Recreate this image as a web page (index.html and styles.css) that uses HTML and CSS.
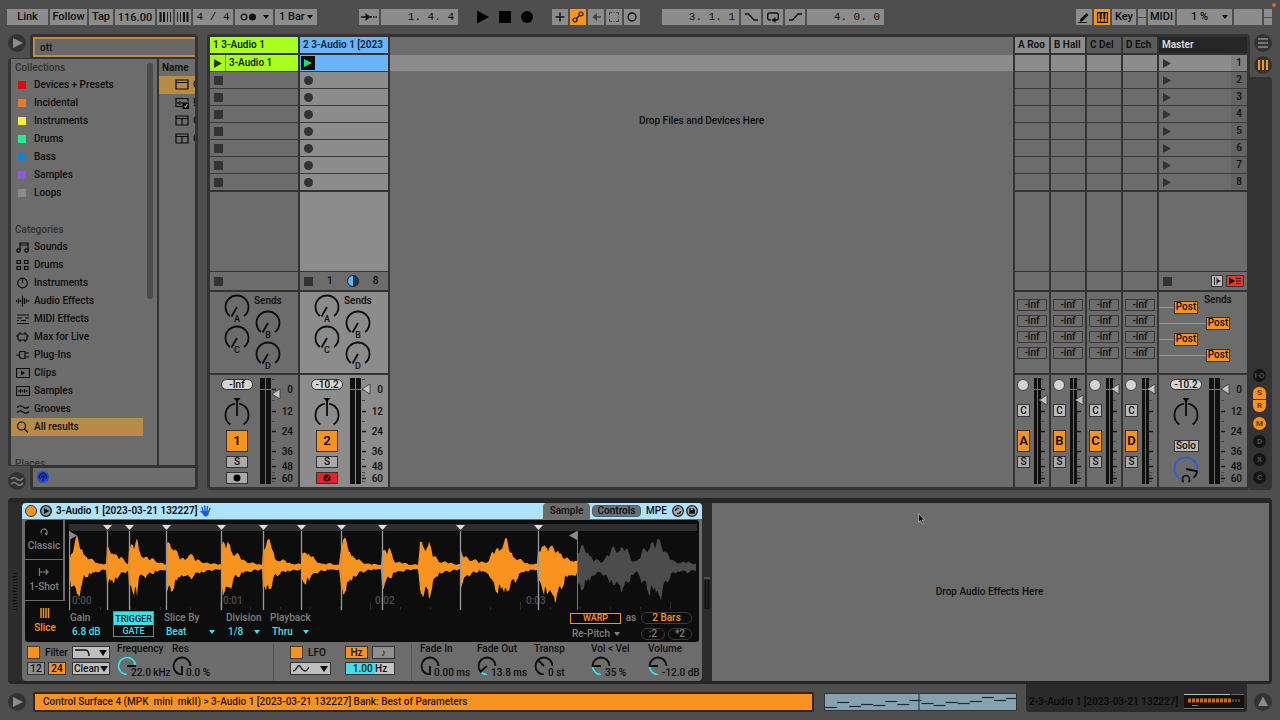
FILE: index.html
```html
<!DOCTYPE html>
<html lang="en">
<head>
<meta charset="utf-8">
<title>Session View</title>
<link rel="stylesheet" href="styles.css">
</head>
<body>
<header class="toolbar">
  <div class="group">
    <button class="tb w41">Link</button>
    <button class="tb w37">Follow</button>
    <button class="tb w24">Tap</button>
    <input class="tb w40" aria-label="Tempo" value="116.00">
    <button class="tb w16" aria-label="Nudge down"><svg width="12" height="10"><path d="M1.5 0v10M5 0v10" stroke="#111" stroke-width="2"/><path d="M8.5 0v10M11.5 0v10" stroke="#222"/></svg></button>
    <button class="tb w16" aria-label="Nudge up"><svg width="12" height="10"><path d="M.5 0v10M3.5 0v10" stroke="#222"/><path d="M7 0v10M10.500 0v10" stroke="#111" stroke-width="2"/></svg></button>
    <input class="tb w40 mono" aria-label="Time signature" value="4 / 4">
    <button class="tb w38 spread" aria-label="Metronome"><svg width="17" height="8"><circle cx="4" cy="4" r="2.800" fill="none" stroke="#111" stroke-width="1.300"/><circle cx="12.500" cy="4" r="3.600" fill="#111"/></svg><i class="caret"></i></button>
    <label class="drop w42"><select class="tb left" aria-label="Quantization"><option>1 Bar</option></select><i class="caret"></i></label>
  </div>
  <div class="group g-pos">
    <button class="tb w20" aria-label="Arrangement position"><svg width="16" height="8"><path d="M0 4h6M9 4h2M12 4h1.500M14.500 4h1.500" stroke="#111" stroke-width="1.300"/><path d="M4.500 0L9.500 4 4.500 8z" fill="#111"/></svg></button>
    <input class="tb w77 mono end" aria-label="Position" value="1. 4. 4">
  </div>
  <div class="group transport">
    <button class="bare" aria-label="Play"><svg width="12" height="14"><path d="M0 .500L12 7 0 13.500z"/></svg></button>
    <button class="bare" aria-label="Stop"><svg width="12" height="14"><path d="M0 1h12v12H0z"/></svg></button>
    <button class="bare" aria-label="Record"><svg width="12" height="14"><circle cx="6" cy="7" r="6"/></svg></button>
  </div>
  <div class="group g-auto">
    <button class="tb w16" aria-label="Overdub"><svg width="10" height="10"><path d="M5 .500v9M.500 5h9" stroke="#111" stroke-width="1.500"/></svg></button>
    <button class="tb w16 on" aria-label="Automation arm"><svg width="12" height="12"><circle cx="3" cy="9" r="2" fill="none" stroke="#111" stroke-width="1.200"/><circle cx="9" cy="3" r="2" fill="none" stroke="#111" stroke-width="1.200"/><path d="M4.500 7.500l3-3" stroke="#111" stroke-width="1.200"/></svg></button>
    <button class="tb w16" aria-label="Re-enable automation"><svg width="9" height="8"><path d="M9 4H3" stroke="#444" stroke-width="1.500"/><path d="M5 0v8L.500 4z" fill="#444"/></svg></button>
    <button class="tb w16" aria-label="Capture"><svg width="10" height="10" fill="none" stroke="#444"><path d="M.500 3V.500H3M7 .500h2.500V3M9.500 7v2.500H7M3 9.500H.500V7M.500 4.500v1M9.500 4.500v1M4.500 .500h1M4.500 9.500h1"/></svg></button>
    <button class="tb w16" aria-label="Session record"><svg width="10" height="10"><circle cx="5" cy="5" r="4" fill="none" stroke="#111" stroke-width="1.300"/></svg></button>
  </div>
  <div class="group g-loop">
    <input class="tb w77 mono end" aria-label="Loop start" value="3. 1. 1">
    <button class="tb w20" aria-label="Punch in"><svg width="13" height="8"><path d="M0 1h3.500l5.500 6h4" fill="none" stroke="#111" stroke-width="1.400"/></svg></button>
    <button class="tb w20" aria-label="Loop"><svg width="12" height="11"><path d="M4 8H2.500Q.700 8 .700 6V3Q.700 1 2.500 1h7Q11.300 1 11.300 3v3q0 2-1.800 2H8" fill="none" stroke="#111" stroke-width="1.400"/><path d="M8.500 5v6L4.500 8z" fill="#111"/></svg></button>
    <button class="tb w20" aria-label="Punch out"><svg width="13" height="8"><path d="M0 7h3.500L9 1h4" fill="none" stroke="#111" stroke-width="1.400"/></svg></button>
    <input class="tb w77 mono end" aria-label="Loop length" value="4. 0. 0">
  </div>
  <div class="group g-right">
    <button class="tb w16" aria-label="Draw mode"><svg width="12" height="12"><path d="M2 8.500L8.500 2l2 2L4 10.500H2z" fill="#111"/><path d="M0 11.500h9" stroke="#111"/></svg></button>
    <button class="tb w16 on" aria-label="Computer keyboard"><svg width="11" height="11"><path d="M.6 .6h9.800v9.800H.6z" fill="none" stroke="#111" stroke-width="1.200"/><path d="M3.700 1v6M7.300 1v6" stroke="#111" stroke-width="2"/><path d="M3.700 6v4M7.300 6v4" stroke="#111" stroke-width=".8"/></svg></button>
    <button class="tb w24">Key</button>
    <div class="pair"><i></i><i></i></div>
    <button class="tb w27">MIDI</button>
    <label class="drop w55"><select class="tb center" aria-label="CPU load"><option>1 %</option></select><i class="caret"></i></label>
    <div class="tb w28"></div>
    <div class="pair"><i></i><i></i></div>
  </div>
  <i class="rec-dot"></i>
</header>

<main class="workspace">
  <aside class="browser">
    <div class="browser-top">
      <button class="round" aria-label="Hide browser"><svg width="18" height="18"><path d="M5 4l10 5-10 5z" fill="#8c8c8c"/></svg></button>
      <div class="search-tab"><input class="search" aria-label="Search" value="ott"></div>
    </div>
    <div class="browser-main">
      <nav class="side" id="side"></nav>
      <div class="scroll"><i></i></div>
      <div class="results" id="results"></div>
    </div>
    <div class="browser-foot">
      <button class="round" aria-label="Groove pool"><svg width="18" height="18"><path d="M3 7q3-3 6 0t6-1M3 12q3-3 6 0t6-1" fill="none" stroke="#808080" stroke-width="1.500"/></svg></button>
      <div class="foot-tab"><div class="foot-in"><svg width="14" height="14"><circle cx="7" cy="7" r="6" fill="#2447d8"/><path d="M4.500 9A3.400 3.400 0 1 1 9.500 9M7 11V5.500M5.200 7.200L7 5.400l1.800 1.800" fill="none" stroke="#101a50" stroke-width="1.300"/></svg></div></div>
    </div>
  </aside>
  <section class="session" id="session"></section>
  <aside class="rail">
    <div class="rail-top">
      <button class="round" aria-label="Arrangement view"><svg width="18" height="18"><path d="M4 5h10M4 9h10M4 13h10" stroke="#8c8c8c" stroke-width="1.500"/></svg></button>
      <button class="round" aria-label="Session view"><svg width="18" height="18"><path d="M5 4v10M9 4v10M13 4v10" stroke="#f7931e" stroke-width="2"/></svg></button>
    </div>
    <div class="rail-body">
      <button class="chip">I·O</button>
      <div class="chip-pair"><button class="chip lit up">S</button><button class="chip lit down">R</button></div>
      <button class="chip lit">M</button>
      <button class="chip">D</button>
      <button class="chip">X</button>
      <button class="chip">C</button>
    </div>
  </aside>
</main>

<section class="detail">
  <div class="grip"></div>
  <article class="device">
    <header class="dev-head">
      <button class="dot-on" aria-label="Device on"></button>
      <button class="dot-play" aria-label="Preview"><svg width="12" height="12"><circle cx="6" cy="6" r="5.300" fill="#8899a5" stroke="#111" stroke-width="1.300"/><path d="M4 3l5.500 3L4 9z" fill="#111"/></svg></button>
      <h2>3-Audio 1 [2023-03-21 132227]</h2>
      <svg width="11" height="12" viewBox="0 0 11 12"><path d="M3 7L2 2.500M5 6L4.600 1M7 6l.500-4.500M8.500 7l1.500-3.500M3.500 8.500L1 6.500" stroke="#1d5fd0" stroke-width="1.500" stroke-linecap="round"/><path d="M2.500 6h6.500l-.500 4-2 1.500h-2L3 9.500z" fill="#1d5fd0"/></svg>
      <div class="tabs">
        <button class="tab cur">Sample</button>
        <button class="tab pill">Controls</button>
        <button class="tab plain">MPE</button>
        <svg width="12" height="12"><circle cx="6" cy="6" r="5.300" fill="#aaa" stroke="#222" stroke-width="1.300"/><path d="M3.500 6A2.500 2.500 0 0 1 7 3.600M8.500 6A2.500 2.500 0 0 1 5 8.400" fill="none" stroke="#222" stroke-width="1.400"/></svg>
        <svg width="12" height="12"><circle cx="6" cy="6" r="5.300" fill="#aaa" stroke="#222" stroke-width="1.300"/><path d="M3.300 3.300h4.400l1.200 1.200v4.200H3.300z" fill="#111"/><path d="M4.800 3.500h2v1.500h-2z" fill="#aaa"/></svg>
      </div>
    </header>
    <div class="screen">
      <div class="modes">
        <button class="mode"><svg width="12" height="10"><path d="M3.500 7.500A3 3 0 1 1 9 6.500V8M7 7l2 2" fill="none" stroke="#808080" stroke-width="1.200"/></svg>Classic</button>
        <button class="mode"><svg width="12" height="10"><path d="M1.500 1v8M2 5h8M7.500 2.500L10 5 7.500 7.500" fill="none" stroke="#808080" stroke-width="1.200"/></svg>1-Shot</button>
        <button class="mode lit"><svg width="12" height="10"><path d="M2 0v10M4.500 0v10M7 0v10M9.500 0v10" stroke="#f7931e" stroke-width="1.500"/></svg>Slice</button>
      </div>
      <div class="wave-side">
        <svg class="wave" id="wave" viewBox="0 0 628 88" preserveAspectRatio="none"></svg>
        <div class="params">
          <div class="p p-gain"><span>Gain</span><b>6.8 dB</b></div>
          <div class="trig"><button class="t-on">TRIGGER</button><button class="t-off">GATE</button></div>
          <div class="p p-slice"><label for="s1">Slice By</label><div class="drop"><select id="s1"><option>Beat</option></select><i class="caret"></i></div></div>
          <div class="p p-div"><label for="s2">Division</label><div class="drop"><select id="s2"><option>1/8</option></select><i class="caret"></i></div></div>
          <div class="p p-play"><label for="s3">Playback</label><div class="drop"><select id="s3"><option>Thru</option></select><i class="caret"></i></div></div>
          <div class="warp">
            <button class="warp-b">WARP</button><span class="as">as</span><button class="bars">2 Bars</button>
            <div class="drop re"><select aria-label="Warp mode"><option>Re-Pitch</option></select><i class="caret"></i></div>
            <div class="halves"><button>:2</button><button>*2</button></div>
          </div>
        </div>
      </div>
    </div>
    <div class="dev-foot">
      <div class="filter">
        <div class="row"><button class="sq" aria-label="Filter on"></button><span class="name">Filter</span><button class="lite w38" aria-label="Filter type"><svg width="17" height="8"><path d="M0 1h10q4 0 4 6" fill="none" stroke="#111" stroke-width="1.500"/></svg><i class="caret big"></i></button></div>
        <div class="row"><button class="num">12</button><button class="num on">24</button><label class="drop lite w38 push"><select aria-label="Filter circuit"><option>Clean</option></select><i class="caret big"></i></label></div>
      </div>
      <div class="knobs" id="knobsA"></div>
      <div class="lfo">
        <div class="row"><button class="sq" aria-label="LFO on"></button><span class="name">LFO</span></div>
        <button class="lite w41" aria-label="LFO shape"><svg width="16" height="9"><path d="M0 7Q2 7 4 3.500T8 3.500 12 7t4-4" fill="none" stroke="#111" stroke-width="1.300"/></svg><i class="caret big"></i></button>
      </div>
      <div class="rate">
        <div class="row"><button class="num hz on">Hz</button><button class="num hz">♪</button></div>
        <input class="rate-v" aria-label="LFO rate" value="1.00 Hz">
      </div>
      <div class="knobs far" id="knobsB"></div>
    </div>
  </article>
  <div class="meter-gap"><svg width="6" height="34"><path d="M1.500 5v29M4.500 5v29" stroke="#111" stroke-width="2"/><path d="M0 3h6" stroke="#777"/></svg></div>
  <div class="fx-drop">
    <span>Drop Audio Effects Here</span>
    <svg class="pointer" width="8" height="12"><path d="M.500 .500v9l2-2 1.500 3.500 1.500-.700L4 7h3z" fill="#111" stroke="#bbb" stroke-width=".700"/></svg>
  </div>
</section>

<footer class="status">
  <button class="round" aria-label="Show help"><svg width="18" height="18"><path d="M5 4l10 5-10 5z" fill="#8c8c8c"/></svg></button>
  <div class="msg">Control Surface 4 (MPK&nbsp; mini&nbsp; mkII) &gt; 3-Audio 1 [2023-03-21 132227] Bank: Best of Parameters</div>
  <div class="overview"><svg viewBox="0 0 190 16" preserveAspectRatio="none" id="overview"></svg></div>
  <div class="chain"><span>2-3-Audio 1 [2023-03-21 132227]</span><svg width="60" height="16"><path d="M0 0h60v16H0z" fill="#15110e"/><path d="M0 .500h46" stroke="#9fc4d8"/><path d="M47 .500h13" stroke="#667"/><path d="M0 14.500h60" stroke="#777"/><path d="M8 11.500h6" stroke="#2aa"/><path d="M4 6.500h44" stroke="#c86a1c" stroke-width="4" stroke-dasharray="3 1"/><path d="M48 6.500h8" stroke="#444" stroke-width="3" stroke-dasharray="2 1"/></svg></div>
  <button class="round" aria-label="Show detail view"><svg width="18" height="18"><path d="M9 3.500l5 9.500H4z" fill="#8c8c8c"/></svg></button>
</footer>
<script src="app.js"></script>
</body>
</html>
```
FILE: styles.css
```css
*{box-sizing:border-box}
body{margin:0;min-height:100vh;display:flex;flex-direction:column;background:#4e4e4e;color:#0c0c0c;font:500 10px/14px Roboto,"Liberation Sans",sans-serif;overflow-x:hidden}
button,input,select{font:inherit;color:inherit;border:0;padding:0;margin:0;border-radius:0;background:none;appearance:none;outline:0;min-width:0}
button{display:flex;align-items:center;justify-content:center;white-space:nowrap}
svg{display:block;flex:none}
i{display:block}
h2{margin:0;font:inherit;font-weight:600}

/* Toolbar */
.toolbar{display:flex;align-items:flex-start;padding:9px 8px 0 7px;height:34px;position:relative}
.group{display:flex;gap:2px}
.g-pos{margin-left:42px}
.transport{margin-left:19px;gap:10px}
.g-auto{margin-left:19px}
.g-loop{margin-left:22px}
.g-right{margin-left:auto}
.tb{height:16px;background:#8c8c8c;font-size:11px;text-align:center}
.mono{font-family:"Liberation Mono",monospace;font-weight:400;font-size:11px}
.end{text-align:right;padding-right:4px}
.left{text-align:left;padding-left:4px}
.center{padding-left:14px;text-align:left}
.bare{height:16px}
.on{background:#f7931e}
.spread{justify-content:space-between;padding:0 4px 0 5px}
.w16{width:16px}.w20{width:20px}.w24{width:24px}.w27{width:27px}.w28{width:28px}
.w37{width:37px}.w38{width:38px}.w40{width:40px}.w41{width:41px}.w42{width:42px}.w55{width:55px}.w77{width:77px}
.pair{width:8px;display:flex;flex-direction:column;gap:1px}
.pair i{flex:1;background:#8c8c8c}
.drop{display:flex;align-items:center;position:relative}
.drop select{flex:1}
.drop .caret{position:absolute;right:4px;pointer-events:none}
.caret{border:solid transparent;border-width:4px 3px 0;border-top-color:currentColor}
.caret.big{border-width:6px 4px 0}
.rec-dot{position:absolute;right:4px;top:3px;width:4px;height:4px;border-radius:50%;background:#d2691e}

/* Work area */
.workspace{flex:1;display:grid;grid-template-columns:190px 1fr 22px;padding:0 8px}
.session{margin-left:9px}
.round{width:18px;height:18px;border-radius:50%;background:#333;flex:none}
.browser{display:flex;flex-direction:column;min-width:0}
.browser-top,.browser-foot{display:flex;gap:4px}
.search-tab{flex:1;background:#333;border-radius:4px 4px 0 0;padding:3px 3px 1px;min-width:0}
.search{display:block;width:100%;height:20px;border:solid #b98d45;border-width:2px 0 2px 2px;background:#686868;padding-left:5px;color:#111}
.browser-main{flex:1;display:flex;background:#333;border-radius:4px 0 0 0;padding:1px 3px 1px;min-height:0}
.side{width:132px;background:#6c6c6c;height:406px;overflow:hidden}
.side h3{margin:0;font:inherit;line-height:17px;color:#333;padding-left:4px}
.side h3.gap{margin-top:19px}
.side a{display:flex;align-items:center;height:18px;padding-left:5px;color:inherit;text-decoration:none}
.side a.sel{background:#b68c46}
.side .ic{width:18px;flex:none}
.side .sw{width:8px;height:8px;margin:0 8px 0 2px}
.scroll{width:14px;background:#6c6c6c;padding:4px 4px 0}
.scroll i{width:6px;height:236px;border-radius:3px;background:#4b4b4b}
.results{flex:1;margin-left:2px;background:#6c6c6c;overflow:hidden;min-width:0}
.results h3{margin:0;font:inherit;font-weight:600;line-height:17px;padding-left:3px}
.res{display:flex;align-items:center;gap:4px;height:18px;padding-left:16px}
.res.sel{background:#b68c46}
.browser-foot{align-items:flex-end}
.foot-tab{flex:1;background:#333;border-radius:0 0 4px 4px;padding:2px 3px 3px}
.foot-in{background:#6c6c6c;height:19px;padding:2px 3px}

/* Session grid */
.session{background:#333;border-radius:4px;padding:3px;display:grid;grid-template-columns:88px 88px 1fr repeat(4,34px) 88px;gap:2px}
.track{display:grid;grid-template-rows:16px auto 1fr 17px 81px 112px;row-gap:2px;min-width:0;background:#333}
.track>*{background:#6c6c6c}
.track.hot>*,.track.hot .slot{background:#8c8c8c}
.title{padding-left:3px;line-height:16px;font-weight:600;overflow:hidden;white-space:nowrap}
.track .t-green{background:#a8ff1f;color:#122}
.track.hot .t-blue{background:#6bb4fb;color:#0c2438}
.track .t-lite{background:#8c8c8c}
.track .t-dim{background:#5c5c5c}
.track .t-dark{background:#262626;color:#ddd}
.track .slots{display:grid;grid-template-rows:repeat(8,16px);gap:1px;background:#3a3a3a}
.slot{display:flex;align-items:center;justify-content:flex-start;background:#6c6c6c;padding-left:4px}
.slot.scene-sel{background:#8c8c8c}
.slot.clip{background:#a8ff1f;padding-left:0}
.slot.clip svg{width:16px;border-right:1px solid #6a9d20;height:16px;margin-right:3px}
.hot .slot.play{background:#6bb4fb;padding-left:1px}
.slot b{margin-left:auto;width:16px;line-height:16px;background:#636363;font-weight:500;text-align:center}
.slot.scene-sel b{background:#808080}
.stops{display:flex;align-items:center;padding-left:4px;margin-top:-1px;gap:14px}
.track.hot .stops{background:#6c6c6c}
.stops .tail{display:flex;gap:3px;margin-left:auto;padding-right:3px}
.mid{background:#6c6c6c;display:flex;flex-direction:column;min-width:0}
.mid .bar{margin-top:18px;height:16px;background:#8c8c8c}
.mid p{margin:43px 0 0;text-align:center}
.mix{display:grid;grid-template-columns:50px 38px}
.strip{display:flex;flex-direction:column;align-items:center;padding:4px 0 0 4px}
.vol{width:32px;height:11px;line-height:9px;border:1px solid #333;border-radius:6px;background:#d4d4d4;text-align:center}
.strip svg{margin-top:6px}
.num-b{width:22px;height:22px;border:1px solid #333;background:#f7931e;font-size:13px;font-weight:600;margin-top:4px}
.small{width:22px;height:12px;border:1px solid #333;background:#aaa;margin-top:4px}
.small.red{background:#e5222c}
.solo{width:25px;height:12px;border:1px solid #333;background:#bbb;margin-top:14px}
.strip svg.recdot{margin:0}
.strip svg.cue{margin-top:3px}
.ret .mix{grid-template-columns:16px 18px}
.ret .strip{padding:4px 0 0 2px;align-items:flex-start}
.ball{width:12px;height:12px;border-radius:50%;border:1px solid #444;background:#d4d4d4}
.cross{width:13px;height:13px;border:1px solid #333;background:#bbb;margin-top:13px}
.ret .num-b{width:13px;margin-top:13px}
.ret .small{width:13px}
.infs{display:grid;grid-template-rows:repeat(4,12px);gap:4px;padding:7px 2px 0}
.infs button{border:1px solid #3a3a3a}
.posts{display:flex;flex-direction:column;gap:4px;padding-top:9px}
.posts div{display:flex;align-items:center;height:12px}
.posts div::before{content:"";height:1px;width:15px;background:#999}
.posts .wide::before{width:47px}
.posts button{height:13px;width:24px;border:1px solid #333;background:#f7931e}
.posts span{margin:-14px 0 0 6px}
text{font:500 9px Roboto,"Liberation Sans",sans-serif;fill:#0c0c0c}
text.lb{font-size:10px}
text.tm{font-size:10px;fill:#505050}

/* View rail */
.rail{display:flex;flex-direction:column}
.rail-top{height:43px;padding:0 0 0 4px;display:flex;flex-direction:column;gap:4px}
.rail-body{flex:1;background:#333;border-radius:0 4px 4px 0;display:flex;flex-direction:column;justify-content:flex-end;align-items:center;gap:5px;padding:0 3px 6px 0}
.chip{width:13px;height:13px;border-radius:50%;background:#141414;color:#555;font-size:8px;line-height:10px;font-weight:600}
.chip.lit{background:#f7931e;color:#553008}
.chip-pair{display:flex;flex-direction:column;gap:1px}
.chip.up{border-radius:6px 6px 0 0;height:12px}
.chip.down{border-radius:0 0 6px 6px;height:12px}

/* Device view */
.detail{margin:8px 8px 0;background:#2c2c2c;border:1px solid #262626;border-width:5px 3px 3px 0;border-radius:4px;display:flex}
.grip{width:14px;display:flex;align-items:center;justify-content:center}
.grip::before{content:"";width:4px;height:38px;background:repeating-linear-gradient(#111 0 1px,#2c2c2c 1px 3px)}
.device{width:680px;border-radius:4px;overflow:hidden;background:#6c6c6c;flex:none}
.dev-head{display:flex;align-items:center;height:16px;background:#aee2fd;padding:0 4px 0 3px}
.dot-on{width:12px;height:12px;border-radius:50%;background:#f7931e;border:1px solid #333}
.dot-play{margin:0 4px 0 3px}
.dev-head h2{margin-right:3px}
.tabs{margin-left:auto;display:flex;align-items:center;gap:2px}
.tab{height:12px}
.tab.cur{height:16px;width:47px;border-radius:4px 4px 0 0;background:#6c6c6c}
.tab.pill{width:49px;border-radius:4px;background:#66727a;border:1px solid #50606a}
.tab.plain{width:27px}
.screen{display:flex;margin:1px 3px 0;background:#0d0d0d;border-radius:3px;height:122px;overflow:hidden}
.modes{width:40px;display:grid;grid-template-rows:40px 41px 41px}
.mode{flex-direction:column;gap:3px;color:#808080;border-right:2px solid #6c6c6c;border-bottom:1px solid #6c6c6c}
.mode.lit{color:#f7931e;border:0}
.wave-side{flex:1;padding:3px 2px 0 4px;min-width:0}
.wave{width:100%;height:88px}
.params{display:flex;align-items:flex-start;color:#808080;padding-left:1px}
.p b,.p select{color:#43dfe8;font-weight:500}
.p b{padding-left:2px}
.p span,.p label,.p b{display:block;white-space:nowrap}
.p .caret{color:#43dfe8;right:0}
.p select{height:14px;padding-left:2px}
.p-gain{width:43px}
.trig{width:41px;height:26px;border:1px solid #6a8a8a;margin-right:10px;display:grid;grid-template-rows:13px 11px}
.trig button{font-size:9px;font-weight:500;overflow:hidden}
.t-on{background:#43dfe8;color:#0d2a2c}
.t-off{color:#43dfe8}
.p-slice{width:51px;margin-right:11px}
.p-div{width:34px;margin-right:10px}
.p-play{width:39px}
.warp{margin-left:auto;width:125px;margin-right:2px;display:grid;grid-template-columns:51px 20px 51px;row-gap:2px;align-items:center}
.warp-b{height:11px;border:1px solid #f7931e;color:#f7931e;font-size:9px}
.as{text-align:center}
.bars{height:12px;border:1px solid #3a3a3a;border-radius:6px;color:#f7931e}
.re{grid-column:span 2;width:50px;padding-left:2px}
.re .caret{right:0}
.halves{display:flex;gap:3px}
.halves button{width:24px;height:12px;border:1px solid #3a3a3a;border-radius:6px}
.dev-foot{display:flex;height:39px;padding-top:2px;overflow:hidden}
.row{display:flex;align-items:center;height:13px}
.filter{width:95px;padding:2px 0 0 5px;display:flex;flex-direction:column;gap:3px}
.sq{width:13px;height:13px;background:#f7931e;border:1px solid #4a3a20}
.name{margin:0 auto 0 5px}
.lite{height:13px;border:1px solid #333;background:#bfbfbf}
button.lite{justify-content:space-between;padding:0 2px}
.filter .lite{margin-right:7px}
.lite select{padding-left:1px;height:11px;line-height:11px;width:30px}
.drop.lite .caret{right:1px}
.num{width:18px;height:13px;border:1px solid #333;background:#909090;margin-right:3px}
.num.on{background:#f7931e}
.push{margin-left:auto}
.knobs{display:flex;width:157px;border-right:1px solid #555}
.kn{width:55px}
.kn:nth-child(2){flex:1}
.kn label{display:block;line-height:10px;white-space:nowrap}
.kn div{display:flex;align-items:flex-end}
.kn span{line-height:12px;margin:0 0 -4px -6px;white-space:nowrap}
.lfo{width:55px;padding:2px 0 0 16px;display:flex;flex-direction:column;gap:3px}
.rate{width:82px;padding:2px 0 0 16px;display:flex;flex-direction:column;gap:3px}
.rate .row{justify-content:space-between;width:50px}
.num.hz{width:23px;margin:0}
.rate-v{width:50px;height:13px;border:1px solid #333;background:linear-gradient(90deg,#43dfe8 60%,#c4c4c4 60%);text-align:center}
.knobs.far{flex:1;border-right:0;border-left:1px solid #555;padding-left:8px}
.far .kn,.far .kn:nth-child(2){flex:none;width:57px}
.meter-gap{width:10px;display:flex;align-items:center;justify-content:center}
.fx-drop{flex:1;background:#6c6c6c;display:flex;align-items:center;justify-content:center;position:relative;padding-right:2px}
.pointer{position:absolute;left:206px;top:10px}

/* Status bar */
.status{display:flex;height:36px;padding:0 8px;align-items:center}
.msg{flex:1;margin:0 10px 0 7px;height:20px;border:2px solid #35271a;background:#f7931e;line-height:16px;padding-left:8px;white-space:nowrap;overflow:hidden;border-radius:2px;color:#2a1804}
.overview{width:193px;height:18px;border:1px solid #333;background:#87a2af;margin-right:9px}
.overview svg{width:100%;height:16px}
.chain{display:flex;align-items:center;align-self:flex-start;height:28px;background:#2a2a2a;border-radius:0 0 3px 3px;padding:8px 3px 0;margin-right:7px;color:#080808;width:221px;justify-content:space-between;white-space:nowrap}
```
FILE: app.js
```js
const el = id => document.getElementById(id);
const S = 'stroke="#0c0c0c" fill="none"';

function pt(cx, cy, r, deg) {
  const a = deg * Math.PI / 180;
  return (cx + r * Math.sin(a)).toFixed(2) + ' ' + (cy - r * Math.cos(a)).toFixed(2);
}
function arc(cx, cy, r, from, to, color, w) {
  return `<path d="M${pt(cx, cy, r, from)}A${r} ${r} 0 ${to - from > 180 ? 1 : 0} 1 ${pt(cx, cy, r, to)}" fill="none" stroke="${color}" stroke-width="${w}"/>`;
}
function hand(cx, cy, r0, r1, deg, w) {
  return `<path d="M${pt(cx, cy, r0, deg)}L${pt(cx, cy, r1, deg)}" stroke="#0c0c0c" stroke-width="${w}"/>`;
}

/* Browser */
const swatches = [['Devices + Presets', '#e30613'], ['Incidental', '#e8792b'], ['Instruments', '#f7ef3a'], ['Drums', '#1fef8c'], ['Bass', '#1782c9'], ['Samples', '#8e5bd8'], ['Loops', '#8c8c8c']];
const cats = [
  ['Sounds', '<path d="M4 9V2h8v7M4 4h8"/><circle cx="2.500" cy="9.500" r="1.700"/><circle cx="10.500" cy="9.500" r="1.700"/>'],
  ['Drums', '<path d="M1 1.500h3.500v3H1zM8.500 1.500H12v3H8.500zM1 7.500h3.500v3H1zM8.500 7.500H12v3H8.500z"/>'],
  ['Instruments', '<circle cx="6.500" cy="6" r="4.800"/><path d="M6.500 1v5"/>'],
  ['Audio Effects', '<path d="M.500 5v2M2.500 3.500v5M4.500 5v2M6.500 .500v11M8.500 3v6M10.500 4v4M12.500 5v2"/>'],
  ['MIDI Effects', '<path d="M1 2h12M1 5h5M9 5h4M1 7.500h2M5 7.500h5M1 10.500h12"/>'],
  ['Max for Live', '<rect x="2" y="3" width="9" height="6" rx="1"/><path d="M4 1v2M9 1v2M4 9v2M9 9v2M0 5h2M11 5h2"/>'],
  ['Plug-Ins', '<path d="M4 2.500h5v7H5L3.500 8V4zM0 6h3.500M9 4h4M9 8h4"/>'],
  ['Clips', '<path d="M.500 1.500h13v9H.500z"/><path d="M5 3.500v5L9 6z" fill="#0c0c0c" stroke="none"/>'],
  ['Samples', '<path d="M.500 1.500h13v9H.500zM2 6h2M4.500 4v4M6.500 5v2M8.500 4v4M10.500 5v2"/>'],
  ['Grooves', '<path d="M1 4.500Q4 1.500 7 4t6-.500M1 9.500Q4 6.500 7 9t6-.500"/>'],
  ['All results', '<circle cx="5.500" cy="5" r="4"/><path d="M8.500 8l3.500 3.500"/>']
];
el('side').innerHTML = '<h3>Collections</h3>' +
  swatches.map(s => `<a href="#"><i class="sw" style="background:${s[1]}"></i>${s[0]}</a>`).join('') +
  '<h3 class="gap">Categories</h3>' +
  cats.map((c, i) => `<a href="#"${i === 10 ? ' class="sel"' : ''}><span class="ic"><svg width="14" height="12" ${S} stroke-width="1.200">${c[1]}</svg></span>${c[0]}</a>`).join('') +
  '<h3 class="gap">Places</h3>';

const frame = '<path d="M1 1h12v9H1zM1 3.500h12"/>';
const split = frame + '<path d="M7 3.500V10"/>';
const sampleIc = '<path d="M7 9.500H1v-8h12v3M3 5v2M5 4v4M7 5v1.500"/><path d="M8 6h6v6H8z" fill="#0c0c0c"/><path d="M9.500 9l1 1 2-3" stroke="#aaa"/>';
el('results').innerHTML = '<h3>Name</h3>' + [frame, sampleIc, split, split].map((p, i) =>
  `<div class="res${i ? '' : ' sel'}"><svg width="14" height="12" ${S} stroke-width="1.200">${p}</svg>${i === 1 ? '!' : 'O'}</div>`).join('');

/* Session */
const stopSq = '<svg width="9" height="9"><path d="M0 0h9v9H0z" fill="#333"/></svg>';
const dot = '<svg width="9" height="9"><circle cx="4.500" cy="4.500" r="4.500" fill="#333"/></svg>';
const tri = '<svg width="8" height="9"><path d="M0 0l8 4.500L0 9z" fill="#333"/></svg>';

function sends() {
  const k = [[27, 15, 'A'], [58, 31, 'B'], [27, 46, 'C'], [58, 62, 'D']];
  return '<svg width="88" height="81">' + k.map(([x, y, n]) =>
    arc(x, y, 11.5, -142, 142, '#0c0c0c', 1.8) + hand(x, y, 0, 11, -150, 1.8) +
    `<text x="${x}" y="${y + 15}" text-anchor="middle">${n}</text>`).join('') +
    '<text class="lb" x="44" y="12">Sends</text></svg>';
}
const ys = [14, 36, 56, 76, 91, 103];
function meter(fader, thin) {
  const w = thin ? 3 : 5, t = thin ? 10 : 12, x0 = thin ? 3 : 0;
  let s = `<svg width="${thin ? 18 : 38}" height="112"><path d="M${x0} 3h${w}v106h-${w}zM${x0 + w + 1} 3h${w}v106h-${w}z" fill="#101010"/><path d="M${x0} 14.500h${2 * w + 1}" stroke="#777"/>`;
  [4, 25, 46, 66, 84, 97, 100, 106].forEach(y => s += `<path d="M${t} ${y}.500h3" stroke="#444"/>`);
  ys.forEach((y, i) => {
    s += `<path d="M${t} ${y}.500h4" stroke="#111" stroke-width="1.400"/>`;
    if (!thin) s += `<text class="lb" x="33" y="${y + 4}" text-anchor="end">${[0, 12, 24, 36, 48, 60][i]}</text>`;
  });
  const fx = thin ? 8 : 12;
  return s + `<path d="M${fx} ${fader}l8-5v10z" fill="#c4c4c4" stroke="#333" stroke-width=".800"/></svg>`;
}
const pan = '<svg width="28" height="30">' + arc(14, 19, 11.5, -145, -10, '#0c0c0c', 1.8) + arc(14, 19, 11.5, 10, 145, '#0c0c0c', 1.8) +
  '<path d="M14 5v15" stroke="#0c0c0c" stroke-width="1.800"/><path d="M10.500 2h7L14 6z"/></svg>';
const cue = '<svg class="cue" width="28" height="28">' + arc(14, 14, 11.5, -145, 90, '#2f5be0', 1.8) + arc(14, 14, 11.5, 105, 140, '#0c0c0c', 1.8) + hand(14, 14, 0, 12, 102, 1.8) +
  `<path d="M12 26.500h-1.500V24a3.500 3.500 0 0 1 7 0v2.500H16" ${S} stroke-width="1.600"/></svg>`;

function audio(n, hot, name, cls, first, rest, stops, vol, fader, rec) {
  let slots = first;
  for (let i = 0; i < 7; i++) slots += `<button class="slot" aria-label="Slot ${i + 2}">${rest}</button>`;
  return `<div class="track${hot ? ' hot' : ''}"><div class="title ${cls}">${name}</div><div class="slots">${slots}</div><div></div>
  <div class="stops">${stops}</div><div>${sends()}</div>
  <div class="mix"><div class="strip"><div class="vol">${vol}</div>${pan}<button class="num-b">${n}</button><button class="small">S</button>${rec}</div>${meter(fader)}</div></div>`;
}
function ret(n, name, cls, fader) {
  let slots = '';
  for (let i = 0; i < 8; i++) slots += `<div class="slot${i ? '' : ' scene-sel'}"></div>`;
  return `<div class="track ret"><div class="title ${cls}">${name}</div><div class="slots">${slots}</div><div></div><div class="stops"></div>
  <div class="infs">${'<button>-inf</button>'.repeat(4)}</div>
  <div class="mix"><div class="strip"><i class="ball"></i><button class="cross">C</button><button class="num-b">${n}</button><button class="small">S</button></div>${meter(fader, true)}</div></div>`;
}
function master() {
  let slots = '';
  for (let i = 0; i < 8; i++) slots += `<button class="slot${i ? '' : ' scene-sel'}">${tri}<b>${i + 1}</b></button>`;
  return `<div class="track"><div class="title t-dark">Master</div><div class="slots">${slots}</div><div></div>
  <div class="stops">${stopSq}<div class="tail"><svg width="12" height="12"><path d="M.500 .500h11v11H.500z" fill="#bbb" stroke="#333"/><path d="M3.500 2v8M6 2.500v7" stroke="#222"/><path d="M6 4l4 2-4 2z" fill="#222"/></svg><svg width="18" height="12"><path d="M.500 .500h17v11H.500z" fill="#e8382c" stroke="#333"/><path d="M3 2.500L9 6 3 9.500z"/><path d="M10 3.500h5M10 6h5M10 8.500h5" stroke="#111"/></svg></div></div>
  <div class="posts"><div><button>Post</button><span>Sends</span></div><div class="wide"><button>Post</button></div><div><button>Post</button></div><div class="wide"><button>Post</button></div></div>
  <div class="mix"><div class="strip"><div class="vol">-10.2</div>${pan}<button class="solo">Solo</button>${cue}</div>${meter(14)}</div></div>`;
}
const clip1 = `<button class="slot clip"><svg><path d="M4 4l8 4.500L4 13z" fill="#263a10"/></svg>3-Audio 1</button>`;
const clip2 = `<button class="slot play" aria-label="Playing clip"><svg width="14" height="14"><path d="M0 0h14v14H0z" fill="#0c0c0c"/><path d="M3 3l8 4-8 4z" fill="#1fe06a"/></svg></button>`;
const recOff = '<button class="small" aria-label="Arm"><svg class="recdot" width="8" height="8"><circle cx="4" cy="4" r="3.500"/></svg></button>';
const recOn = '<button class="small red" aria-label="Arm"><svg class="recdot" width="8" height="8"><circle cx="4" cy="4" r="3.500" fill="#300"/><path d="M3 6l3-4" stroke="#e5222c" stroke-width="1.200"/></svg></button>';
el('session').innerHTML =
  audio(1, false, '1 3-Audio 1', 't-green', clip1, stopSq, stopSq, '-Inf', 19, recOff) +
  audio(2, true, '2 3-Audio 1 [2023', 't-blue', clip2, dot, stopSq + '<span>1</span><svg width="12" height="12"><circle cx="6" cy="6" r="5.500" fill="#23384e" stroke="#222"/><path d="M6 1a5 5 0 0 0 0 10z" fill="#6bb4fb"/></svg><span>8</span>', '-10.2', 14, recOn) +
  '<div class="mid"><div class="bar"></div><p>Drop Files and Devices Here</p></div>' +
  ret('A', 'A Roo', 't-lite', 25) + ret('B', 'B Hall', 't-lite', 25) + ret('C', 'C Del', 't-dim', 14) + ret('D', 'D Ech', 't-dim', 14) + master();

/* Waveform: [x, amplitude above, amplitude below] key points, roughened between */
const env = [[1,14,20],[5,26,28],[8,30,32],[13,24,24],[15,17,12],[22,8,9],[30,5,5],[37,3,3],[38,20,18],[44,20,20],[50,12,10],[59,4,4],[60,27,28],[68,28,32],[70,18,12],[80,10,9],[90,6,5],[97,3,3],[98,24,32],[104,28,24],[110,12,14],[116,8,9],[120,18,14],[126,9,9],[140,4,4],[152,4,3],[153,24,32],[158,30,30],[165,17,14],[175,8,7],[185,4,4],[193,3,3],[194,26,30],[203,28,22],[206,10,10],[215,7,6],[225,4,4],[232,3,3],[233,20,20],[240,18,16],[246,7,7],[256,4,4],[270,3,3],[272,28,30],[278,28,24],[285,12,12],[292,6,6],[305,3,3],[312,3,3],[313,20,22],[320,20,14],[326,7,7],[340,3,3],[349,3,3],[351,26,30],[360,27,32],[365,13,18],[370,7,8],[380,5,5],[391,3,3],[392,16,24],[398,11,10],[410,6,5],[420,7,8],[424,18,22],[433,28,31],[438,28,28],[444,14,18],[454,6,6],[462,4,4],[468,3,3],[469,18,20],[475,31,28],[482,20,36],[490,22,32],[496,9,14],[508,8,8],[509,20,26],[518,22,20],[524,9,10],[532,6,6],[538,14,14],[546,22,22],[556,23,24],[562,10,12],[568,7,6],[574,18,18],[580,26,28],[592,30,34],[598,15,16],[604,7,8],[612,5,5],[618,6,6],[627,4,4]];
function shape(a, b) {
  const top = [], bot = [];
  for (let x = a, i = 0; x <= b; x++) {
    while (i < env.length - 2 && env[i + 1][0] <= x) i++;
    const p = env[i], q = env[i + 1], t = Math.min(1, Math.max(0, (x - p[0]) / (q[0] - p[0])));
    const k = x >> 1;
    const n = 0.62 + 0.45 * Math.abs(Math.sin(k * 12.9898) * Math.cos(x * 0.41));
    const m = 0.62 + 0.45 * Math.abs(Math.sin(k * 7.233) * Math.cos(x * 0.33));
    top.push(`${x} ${(44 - (p[1] + (q[1] - p[1]) * t) * n).toFixed(1)}`);
    bot.unshift(`${x} ${(44 + (p[2] + (q[2] - p[2]) * t) * m).toFixed(1)}`);
  }
  return 'M' + top.join('L') + 'L' + bot.join('L') + 'z';
}
let w = '<path d="M0 1h628v7H0z" fill="#2e2e2e"/>';
w += `<path d="${shape(1, 508)}" fill="#f7931e"/><path d="${shape(509, 627)}" fill="#4c4c4c"/>`;
w += '<text class="tm" x="3" y="81">0:00</text><text class="tm" x="154" y="81">0:01</text><text class="tm" x="306" y="81">0:02</text><text class="tm" x="457" y="81">0:03</text>';
for (let i = 1; i < 21; i++) w += `<path d="M${i * 30 + 1.5} ${i % 5 ? 84 : 79}v${i % 5 ? 3 : 8}" stroke="#2c2c2c"/>`;
[0, 38, 60, 97, 152, 194, 232, 272, 313, 391, 469].forEach((x, i) => {
  w += `<path d="M${x + .5} 8v79" stroke="#9a9a9a" stroke-width="1.300"/>`;
  if (i) w += `<path d="M${x - 4} 2h9l-4.500 5z" fill="#ddd"/>`;
});
w += '<path d="M508.500 8v79" stroke="#777"/><path d="M0 8v9l8-4.500zM508 8v9l-8-4.500z" fill="#8c8c8c"/>';
el('wave').innerHTML = w;

/* Device knobs */
function knob(name, val, fill, pos) {
  const [a, b] = fill, c = '#43dfe8';
  return `<div class="kn"><label>${name}</label><div><svg width="20" height="21">` +
    arc(10, 12, 8.5, -180, 90, '#0c0c0c', 1.8) + (b > a ? arc(10, 12, 8.5, a, b, c, 2) : '') +
    hand(10, 12, 0, 9, pos, 1.8) + `</svg><span>${val}</span></div></div>`;
}
el('knobsA').innerHTML = knob('Frequency', '22.0 kHz', [-180, 85], 90) + knob('Res', '0.0 %', [0, 0], 180);
el('knobsB').innerHTML = knob('Fade In', '0.00 ms', [0, 0], 180) + knob('Fade Out', '13.8 ms', [-180, -140], -130) + knob('Transp', '0 st', [0, 0], -45) + knob('Vol &lt; Vel', '35 %', [-180, -95], -90) + knob('Volume', '-12.0 dB', [-180, -95], -90);

/* Clip overview */
const notes = [13, 8, 12, 10, 11, 7, 10, 6, 9, 11, 8, 9, 7, 3, 6, 4];
el('overview').innerHTML = notes.map((y, i) => `<path d="M${i * 12} ${y}.500h12" stroke="#1c2a32" stroke-width="1.200"/>`).join('') + '<path d="M93.500 0v16" stroke="#1c2a32"/>';
```
